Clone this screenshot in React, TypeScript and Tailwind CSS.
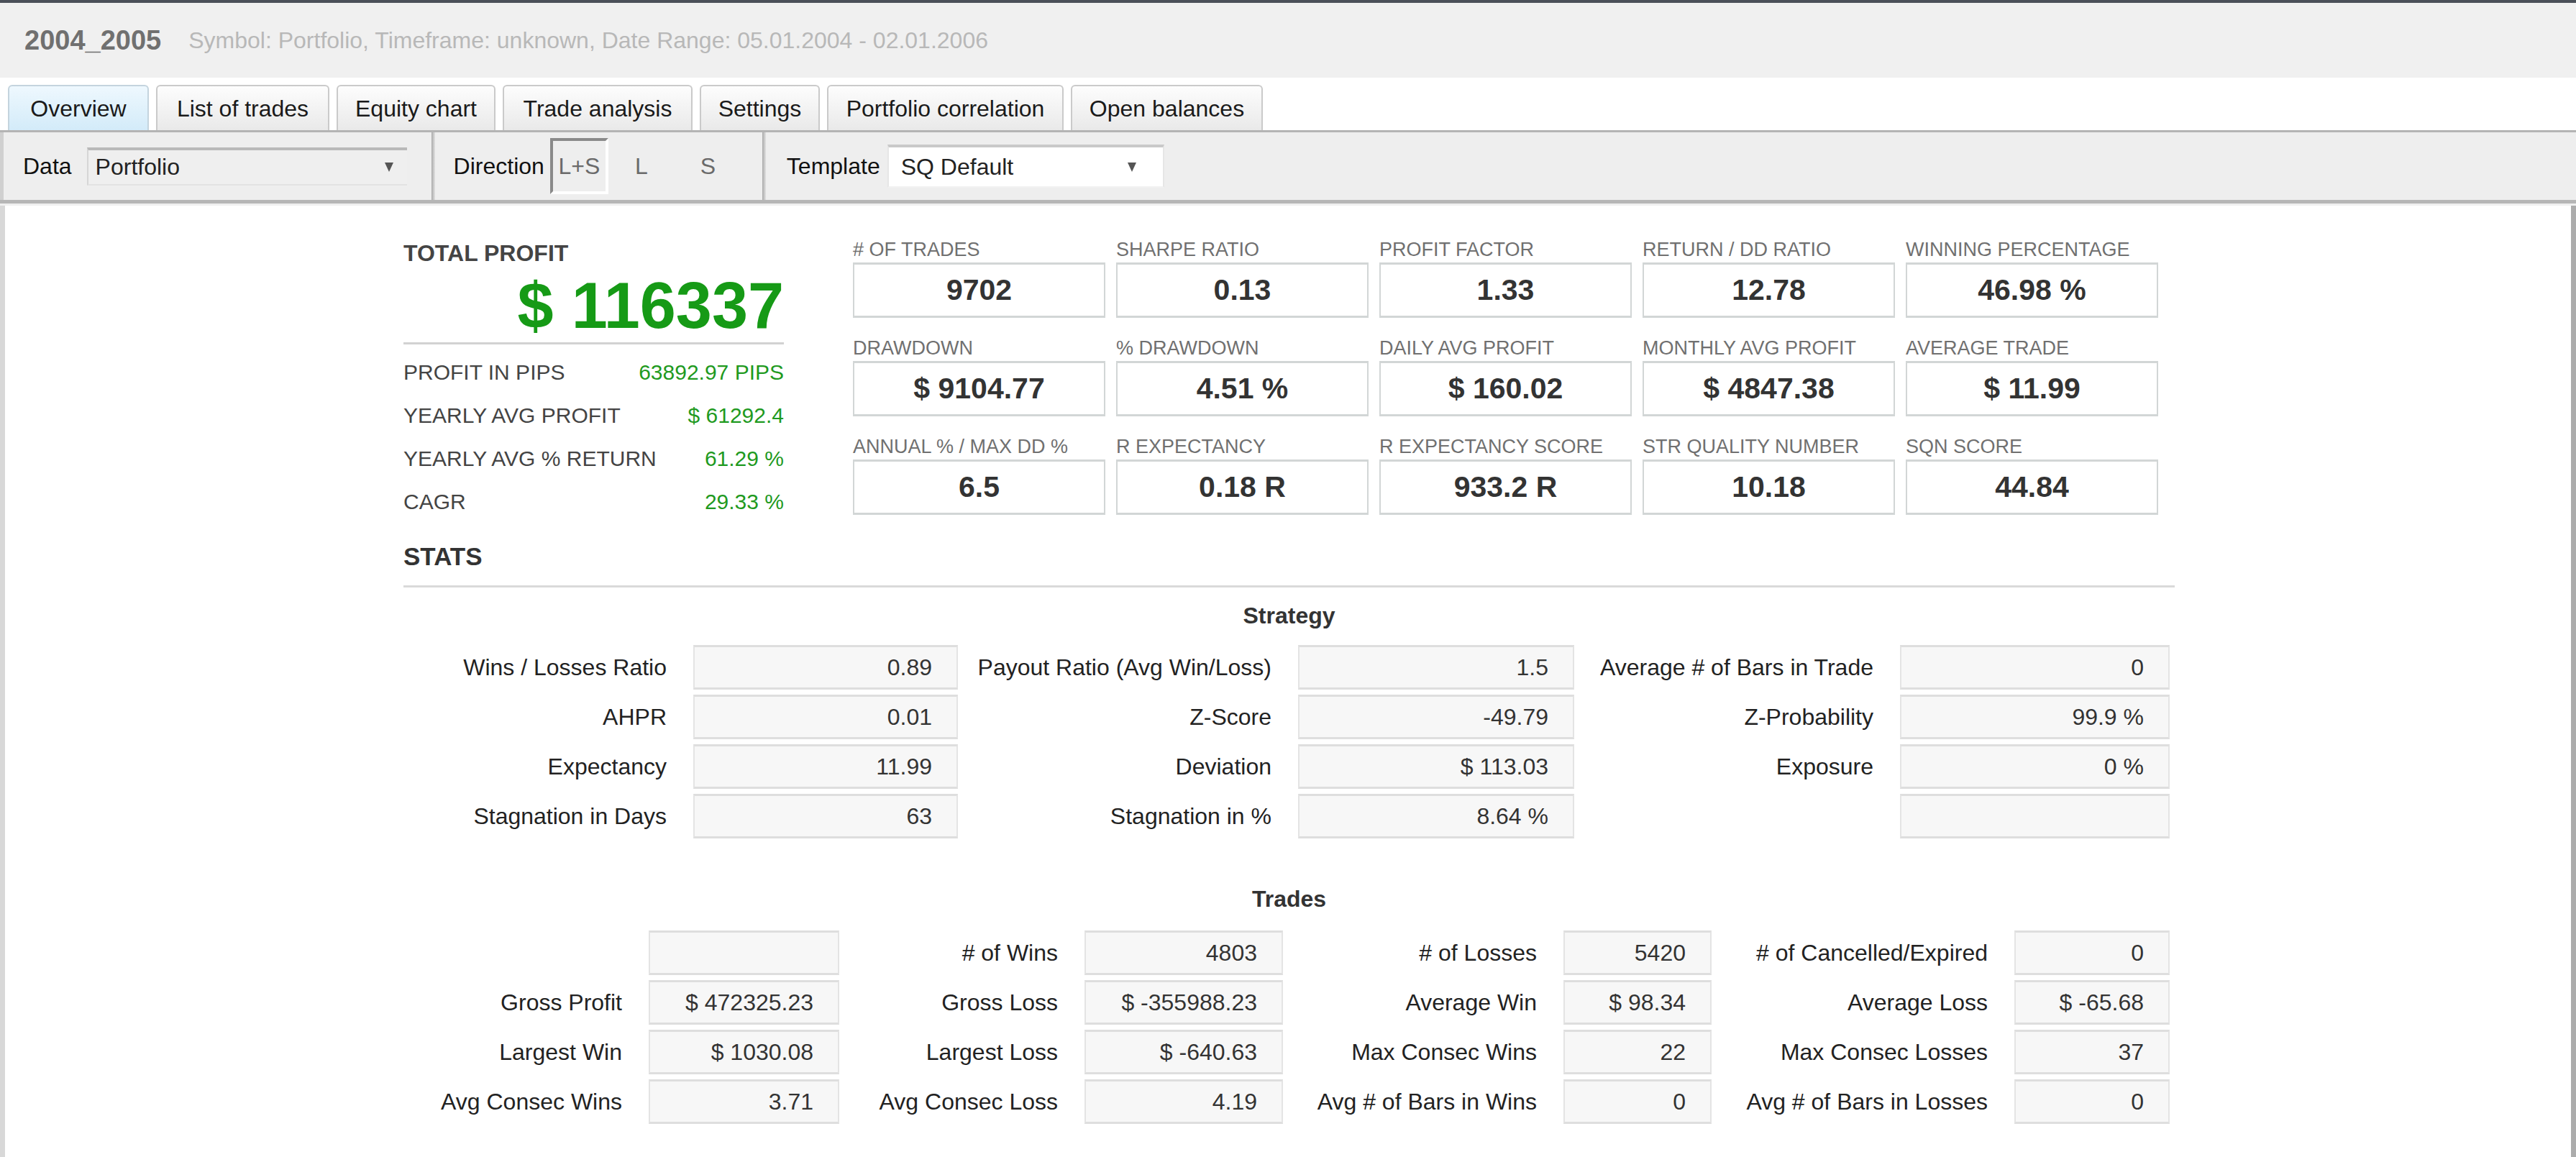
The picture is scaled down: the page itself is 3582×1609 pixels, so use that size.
import React from "react";

const tabs = [
  { label: "Overview", w: "w-[196px]", active: true },
  { label: "List of trades", w: "w-[241px]" },
  { label: "Equity chart", w: "w-[221px]" },
  { label: "Trade analysis", w: "w-[264px]" },
  { label: "Settings", w: "w-[167px]" },
  { label: "Portfolio correlation", w: "w-[329px]" },
  { label: "Open balances", w: "w-[267px]" },
];

const summary = [
  ["PROFIT IN PIPS", "63892.97 PIPS"],
  ["YEARLY AVG PROFIT", "$ 61292.4"],
  ["YEARLY AVG % RETURN", "61.29 %"],
  ["CAGR", "29.33 %"],
];

const cards = [
  ["# OF TRADES", "9702"],
  ["SHARPE RATIO", "0.13"],
  ["PROFIT FACTOR", "1.33"],
  ["RETURN / DD RATIO", "12.78"],
  ["WINNING PERCENTAGE", "46.98 %"],
  ["DRAWDOWN", "$ 9104.77"],
  ["% DRAWDOWN", "4.51 %"],
  ["DAILY AVG PROFIT", "$ 160.02"],
  ["MONTHLY AVG PROFIT", "$ 4847.38"],
  ["AVERAGE TRADE", "$ 11.99"],
  ["ANNUAL % / MAX DD %", "6.5"],
  ["R EXPECTANCY", "0.18 R"],
  ["R EXPECTANCY SCORE", "933.2 R"],
  ["STR QUALITY NUMBER", "10.18"],
  ["SQN SCORE", "44.84"],
];

const strategy: [string, string][][] = [
  [["Wins / Losses Ratio", "0.89"], ["Payout Ratio (Avg Win/Loss)", "1.5"], ["Average # of Bars in Trade", "0"]],
  [["AHPR", "0.01"], ["Z-Score", "-49.79"], ["Z-Probability", "99.9 %"]],
  [["Expectancy", "11.99"], ["Deviation", "$ 113.03"], ["Exposure", "0 %"]],
  [["Stagnation in Days", "63"], ["Stagnation in %", "8.64 %"], ["", ""]],
];

const trades: [string, string][][] = [
  [["", ""], ["# of Wins", "4803"], ["# of Losses", "5420"], ["# of Cancelled/Expired", "0"]],
  [["Gross Profit", "$ 472325.23"], ["Gross Loss", "$ -355988.23"], ["Average Win", "$ 98.34"], ["Average Loss", "$ -65.68"]],
  [["Largest Win", "$ 1030.08"], ["Largest Loss", "$ -640.63"], ["Max Consec Wins", "22"], ["Max Consec Losses", "37"]],
  [["Avg Consec Wins", "3.71"], ["Avg Consec Loss", "4.19"], ["Avg # of Bars in Wins", "0"], ["Avg # of Bars in Losses", "0"]],
];

function Arrow() {
  return (
    <svg width="14" height="16" viewBox="0 0 14 16" className="text-[#555]">
      <polygon points="1,2 13,2 7,15" fill="currentColor" />
    </svg>
  );
}

function Field({ value }: { value: string }) {
  return (
    <div className="flex h-[62px] items-center justify-end border-x-2 border-t-[3px] border-b-[3px] border-x-[#e4e4e4] border-y-[#dedede] bg-[#f7f7f7] pr-[34px] text-[32px] text-[#333]">
      {value}
    </div>
  );
}

function Label({ text }: { text: string }) {
  return (
    <div className="flex h-[62px] items-center justify-end pr-[37px] text-[32px] text-[#222]">
      {text}
    </div>
  );
}

export default function App() {
  return (
    <div className="flex h-[1609px] w-[3582px] flex-col overflow-hidden bg-white font-['Liberation_Sans',Arial,sans-serif]">
      <div className="h-[4px] bg-[#4b5059]" />

      {/* title bar */}
      <div className="flex h-[104px] items-center bg-[#f0f0f0] pl-[34px]">
        <span className="text-[38px] font-bold text-[#707070]">2004_2005</span>
        <span className="ml-[38px] text-[32px] text-[#b8b8b8]">
          Symbol: Portfolio, Timeframe: unknown, Date Range: 05.01.2004 - 02.01.2006
        </span>
      </div>

      {/* tabs */}
      <div className="flex h-[76px] items-end gap-[10px] border-b-[3px] border-[#b4b4b4] bg-white pl-[11px]">
        {tabs.map((t) => (
          <div
            key={t.label}
            className={`flex h-[63px] ${t.w} items-center justify-center rounded-t-[6px] border-2 border-b-0 text-[32px] text-[#1a1a1a] ${
              t.active
                ? "border-[#c4d4de] bg-gradient-to-b from-[#eef8fe] to-[#d3ebf9]"
                : "border-[#cacaca] bg-gradient-to-b from-[#fdfdfd] to-[#e9e9e9]"
            }`}
          >
            {t.label}
          </div>
        ))}
      </div>

      {/* toolbar */}
      <div className="flex h-[94px] items-center border-l-[5px] border-[#d0d0d0] bg-[#eeeeee]">
        <span className="ml-[27px] text-[32px] text-[#111]">Data</span>
        <div className="ml-[21px] flex h-[53px] w-[445px] items-center justify-between border-t-4 border-l-2 border-b-2 border-t-[#b9b9b9] border-l-[#d6d6d6] border-b-[#e2e2e2] bg-[#efefef] pl-[10px] pr-[18px] text-[32px] text-[#222]">
          Portfolio
          <Arrow />
        </div>
        <div className="ml-[34px] h-full w-[5px] bg-gradient-to-r from-[#a9a9a9] to-[#e2e2e2]" />
        <span className="ml-[26px] text-[32px] text-[#111]">Direction</span>
        <div className="ml-[8px] flex h-[78px] w-[81px] items-center justify-center border-4 border-t-[#8a8a8a] border-l-[#8a8a8a] border-r-white border-b-white text-[32px] text-[#6a6a6a]">
          L+S
        </div>
        <div className="flex h-[78px] w-[92px] items-center justify-center text-[32px] text-[#6a6a6a]">L</div>
        <div className="flex h-[78px] w-[93px] items-center justify-center text-[32px] text-[#6a6a6a]">S</div>
        <div className="ml-[29px] h-full w-[5px] bg-gradient-to-r from-[#a9a9a9] to-[#e2e2e2]" />
        <span className="ml-[29px] text-[32px] text-[#111]">Template</span>
        <div className="ml-[10px] flex h-[60px] w-[385px] items-center justify-between border-t-4 border-x-2 border-b-2 border-t-[#c9c9c9] border-x-[#e6e6e6] border-b-[#f2f2f2] bg-white pl-[17px] pr-[36px] text-[32px] text-[#222]">
          SQ Default
          <Arrow />
        </div>
      </div>
      <div className="h-[5px] bg-[#b6b6b6]" />
      <div className="h-[3px] bg-[#f0f0f0]" />

      {/* content */}
      <div className="flex-1 border-l-[7px] border-r-[7px] border-l-[#d8d8d8] border-r-[#acacac] bg-white">
        <div className="ml-[554px] w-[2463px]">
          <div className="flex items-start pt-[46px]">
            <div className="w-[529px]">
              <div className="flex h-[40px] items-center text-[32px] font-bold text-[#444]">TOTAL PROFIT</div>
              <div className="mt-[8px] h-[90px] text-right text-[90px] leading-[90px] font-bold text-[#169a16]">$ 116337</div>
              <div className="mt-[6px] h-[3px] bg-[#d2d2d2]" />
              <div className="mt-[8px]">
                {summary.map(([k, v]) => (
                  <div key={k} className="flex h-[60px] items-center justify-between text-[30px]">
                    <span className="text-[#444]">{k}</span>
                    <span className="text-[#1f9a1f]">{v}</span>
                  </div>
                ))}
              </div>
            </div>

            <div className="ml-[96px] grid grid-cols-[repeat(5,351px)] gap-x-[15px] gap-y-[27px]">
              {cards.map(([k, v]) => (
                <div key={k}>
                  <div className="flex h-[30px] items-center text-[27px] text-[#707070]">{k}</div>
                  <div className="mt-[3px] flex h-[77px] items-center justify-center border-x-2 border-y-[3px] border-[#d2d6d6] bg-white text-[41px] font-bold text-[#333]">
                    {v}
                  </div>
                </div>
              ))}
            </div>
          </div>

          <div className="mt-[27px] flex h-[40px] items-center text-[35px] font-bold text-[#333]">STATS</div>
          <div className="mt-[20px] h-[3px] bg-[#dadada]" />

          <div className="mt-[21px] flex h-[36px] items-center justify-center text-[32px] font-bold text-[#333]">Strategy</div>
          <div className="mt-[23px] grid w-[2456px] grid-cols-[403px_368px_473px_384px_453px_375px] gap-y-[7px]">
            {strategy.flat().map(([k, v], i) => (
              <React.Fragment key={i}>
                <Label text={k} />
                <Field value={v} />
              </React.Fragment>
            ))}
          </div>

          <div className="mt-[66px] flex h-[36px] items-center justify-center text-[32px] font-bold text-[#333]">Trades</div>
          <div className="mt-[26px] grid w-[2456px] grid-cols-[341px_265px_341px_276px_390px_206px_421px_216px] gap-y-[7px]">
            {trades.flat().map(([k, v], i) => (
              <React.Fragment key={i}>
                <Label text={k} />
                <Field value={v} />
              </React.Fragment>
            ))}
          </div>
        </div>
      </div>
    </div>
  );
}
